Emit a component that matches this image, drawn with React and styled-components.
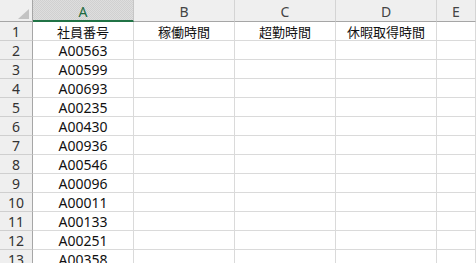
import React from 'react';
import styled, { createGlobalStyle, css } from 'styled-components';

const GlobalStyle = createGlobalStyle`
  html, body {
    margin: 0;
    padding: 0;
    background: #fff;
    overflow: hidden;
  }
`;

const Sheet = styled.div`
  display: grid;
  grid-template-columns: 33px repeat(4, 101px) 1fr;
  grid-auto-rows: 19px;
  grid-template-rows: 22px;
  width: 476px;
  height: 263px;
  overflow: hidden;
  font-family: "Noto Sans", "Noto Sans CJK JP", sans-serif;
  color: #000;
`;

const Corner = styled.div`
  box-sizing: border-box;
  background: #efefef;
  border-right: 1px solid #a6a6a6;
  border-bottom: 1px solid #a6a6a6;
  display: flex;
  align-items: flex-end;
  justify-content: flex-end;
  padding: 0 3px 2px 0;
  svg { display: block; }
`;

const ColHeader = styled.div`
  box-sizing: border-box;
  background: #efefef;
  border-right: 1px solid #d4d4d4;
  border-bottom: 1px solid #a6a6a6;
  display: flex;
  align-items: center;
  justify-content: center;
  font-size: 14px;
  color: #444;
  padding-top: 1px;
  ${p => p.$active && css`
    background: repeating-conic-gradient(#d0d0d0 0 25%, #dedede 0 50%) 0 0 / 2px 2px;
    border-bottom: 2px solid #217346;
    border-right-color: #c6c6c6;
    color: #1d6b40;
    padding-top: 2px;
  `}
`;

const RowHeader = styled.div`
  box-sizing: border-box;
  background: #efefef;
  border-right: 1px solid #a6a6a6;
  border-bottom: 1px solid #cfcfcf;
  display: flex;
  align-items: center;
  justify-content: center;
  font-size: 14px;
  color: #333;
`;

const Cell = styled.div`
  box-sizing: border-box;
  border-right: 1px solid #dadada;
  border-bottom: 1px solid #dadada;
  display: flex;
  align-items: center;
  justify-content: center;
  white-space: nowrap;
  overflow: hidden;
  font-size: ${p => (p.$cjk ? '13px' : '14px')};
  font-family: ${p => (p.$cjk ? '"Noto Sans CJK JP", sans-serif' : '"Noto Sans", "Noto Sans CJK JP", sans-serif')};
  color: #111;
`;

const columns = ['A', 'B', 'C', 'D', 'E'];

const header = ['社員番号', '稼働時間', '超勤時間', '休暇取得時間', ''];

const ids = [
  'A00563', 'A00599', 'A00693', 'A00235', 'A00430', 'A00936',
  'A00546', 'A00096', 'A00011', 'A00133', 'A00251', 'A00358',
];

export default function App() {
  const rows = [header, ...ids.map(id => [id, '', '', '', ''])];
  return (
    <>
      <GlobalStyle />
      <Sheet>
        <Corner>
          <svg width="11" height="10" viewBox="0 0 11 10">
            <polygon points="11,0 11,10 0,10" fill="#c3c3c3" />
          </svg>
        </Corner>
        {columns.map(c => (
          <ColHeader key={c} $active={c === 'A'}>{c}</ColHeader>
        ))}
        {rows.map((row, i) => (
          <React.Fragment key={i}>
            <RowHeader>{i + 1}</RowHeader>
            {row.map((v, j) => (
              <Cell key={j} $cjk={i === 0}>{v}</Cell>
            ))}
          </React.Fragment>
        ))}
      </Sheet>
    </>
  );
}
